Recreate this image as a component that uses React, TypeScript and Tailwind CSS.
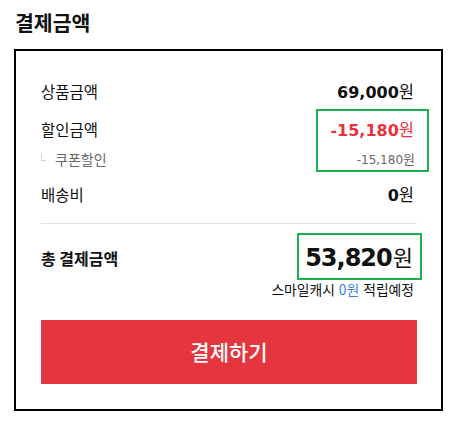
import React from "react";

const KR = { fontFamily: '"Noto Sans CJK KR", "Noto Sans", sans-serif' } as const;
const NUM = { fontFamily: '"DejaVu Sans", "Noto Sans CJK KR", sans-serif' } as const;

function Won({ className = "" }: { className?: string }) {
  return (
    <span className={`font-normal ${className}`} style={KR}>
      원
    </span>
  );
}

export default function App() {
  return (
    <div className="w-[459px] h-[423px] bg-white text-[#111]" style={KR}>
      <div className="pl-[15px] pt-[8px] h-[49px]">
        <h2 className="text-[20.5px] font-bold leading-[28px] text-[#111]">결제금액</h2>
      </div>
      <div className="ml-[14px] w-[429px] border-2 border-black pl-[25px] pr-[24px] pt-[27px] pb-[25px]">
        {/* 상품금액 */}
        <div className="flex h-[28px] items-center justify-between pr-[3px]">
          <span className="text-[15.5px]">상품금액</span>
          <span className="flex items-baseline">
            <span className="text-[16px] font-bold" style={NUM}>69,000</span>
            <Won className="text-[16.5px]" />
          </span>
        </div>
        {/* 할인금액 */}
        <div className="relative mt-[10px]">
          <div className="flex h-[28px] items-center justify-between pr-[3px]">
            <span className="text-[15.5px]">할인금액</span>
            <span className="flex items-baseline text-[#e8333c]">
              <span className="text-[16px] font-bold" style={NUM}>-15,180</span>
              <Won className="text-[16.5px]" />
            </span>
          </div>
          <div className="mt-[6px] flex h-[18px] items-center justify-between pr-[2px]">
            <span className="flex items-center">
              <span className="mb-[3px] mr-[9px] h-[7px] w-[5px] border-b border-l border-[#cfcfcf]" />
              <span className="text-[14px] text-[#666]">쿠폰할인</span>
            </span>
            <span className="flex items-baseline text-[#666]">
              <span className="text-[12px]" style={NUM}>-15,180</span>
              <Won className="text-[13px]" />
            </span>
          </div>
          <div className="pointer-events-none absolute left-[275px] top-[-7px] h-[63px] w-[113px] border-2 border-[#1cb04e]" />
        </div>
        {/* 배송비 */}
        <div className="mt-[13px] flex h-[28px] items-center justify-between pr-[3px]">
          <span className="text-[15.5px]">배송비</span>
          <span className="flex items-baseline">
            <span className="text-[16px] font-bold" style={NUM}>0</span>
            <Won className="text-[16.5px]" />
          </span>
        </div>
        <div className="mt-[14px] h-px bg-[#e3e3e3]" />
        {/* 총 결제금액 */}
        <div className="relative mt-[16px] flex h-[36px] items-center justify-between pr-[4px]">
          <span className="text-[16px] font-bold">총 결제금액</span>
          <span className="flex items-baseline">
            <span className="text-[24px] font-bold tracking-[-1px]" style={NUM}>53,820</span>
            <Won className="ml-[1px] text-[22px]" />
          </span>
          <div className="pointer-events-none absolute left-[256px] top-[-7px] h-[47px] w-[125px] border-2 border-[#1cb04e]" />
        </div>
        <div className="mt-[4px] flex h-[18px] items-center justify-end pr-[3px] text-[13.8px] text-[#111]">
          <span>스마일캐시</span>
          <span className="ml-[4px] text-[#3d7fe0]">0원</span>
          <span className="ml-[4px]">적립예정</span>
        </div>
        <button className="mt-[22px] flex h-[64px] w-full items-center justify-center bg-[#e5363f] text-[21px] font-medium text-white">
          결제하기
        </button>
      </div>
    </div>
  );
}
